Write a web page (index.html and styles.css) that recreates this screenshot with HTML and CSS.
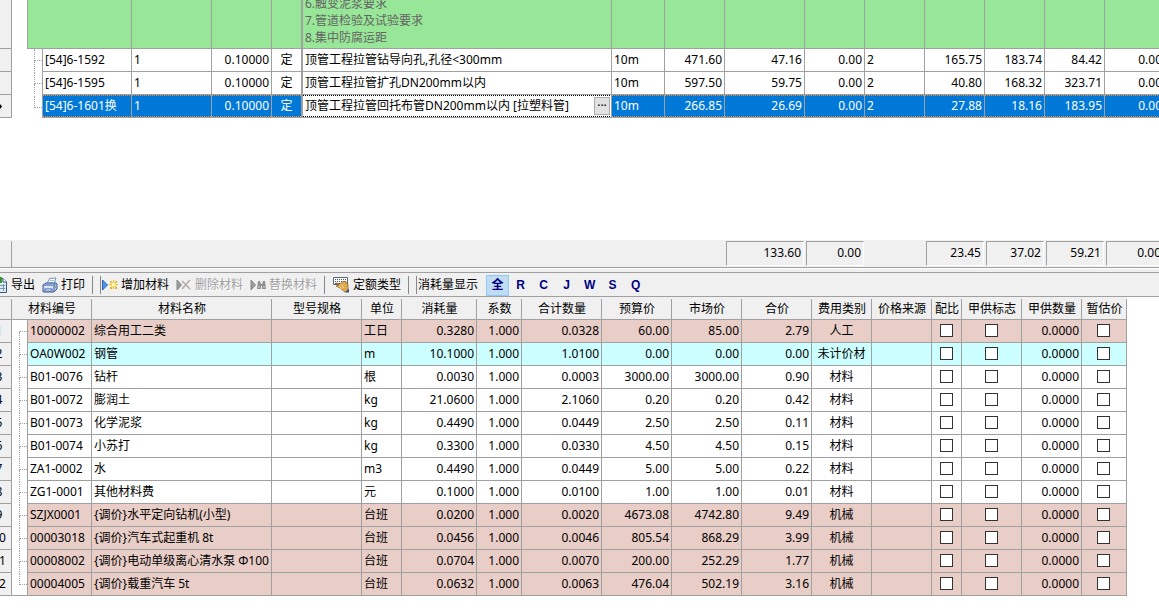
FILE: index.html
```html
<!DOCTYPE html>
<html lang="zh-CN">
<head>
<meta charset="utf-8">
<title>定额材料</title>
<link rel="stylesheet" href="styles.css">
</head>
<body>
<main class="app">
  <section class="quota">
    <table class="grid quota-grid">
      <colgroup id="quota-cols"></colgroup>
      <tbody id="quota-rows"></tbody>
    </table>
  </section>
  <section class="totals" id="totals"></section>
  <div class="splitter"></div>
  <nav class="toolbar">
    <button class="tool" type="button">
      <svg class="icon-export" width="8" height="18" viewBox="0 0 8 18"><path d="M-4 2.500h7l3.500 3.500v10.500H-4z" fill="#dcebf5" stroke="#3c5a78"/><path d="M3 2.500V6h3.500" fill="#fff" stroke="#3c5a78"/><path d="M0 9.500h5M0 12.500h5M3.500 8v7" stroke="#7898b0"/><path d="M0 1h2v6H0z" fill="#3e9430"/></svg>
      导出</button>
    <button class="tool" type="button">
      <svg width="16" height="16" viewBox="0 0 16 16"><path d="M5 7 7.500 1.500 14 1 12 7z" fill="#fff" stroke="#6b8fc7"/><path d="M8 3.500h4M7 5.500h4" stroke="#a3bbdf"/><path d="M1 8 4 6h10l1 1v5l-3 3H1z" fill="#b7c9e8" stroke="#3c5896"/><path d="M1 8h11l3-2M12 8v7" fill="none" stroke="#5272ae"/><path d="M2 10h9" stroke="#fff"/><path d="M3 12h7v2H3z" fill="#fff" stroke="#5272ae"/><path d="M13 9v2" stroke="#3ca03c"/></svg>
      打印</button>
    <i class="sep sep-wide"></i><i class="sep sep-grip"></i>
    <button class="tool" type="button">
      <svg width="16" height="16" viewBox="0 0 16 16"><path d="m.5 3 5 5-5 5z" fill="#4b94e8" stroke="#2860b8"/><g fill="#e6b32c"><path d="M8 4h2v2H8zM11 3h1v2h-1zM13 4h2v2h-2zM7 7h2v1H7zM14 7h2v1h-2zM8 10h2v2H8zM11 10h1v2h-1zM13 10h2v2h-2z"/><path d="M9 5h5v5H9z" fill="#f8d75c"/><path d="M10 6h3v3h-3z" fill="#fffac0"/></g></svg>
      增加材料</button>
    <button class="tool" type="button" disabled>
      <svg width="16" height="16" viewBox="0 0 16 16"><path d="m1 3 4.500 5L1 13z" fill="#9c9c9c" stroke="#888"/><path d="m6 4 8 8M14 3 6 12" stroke="#b5aaaa" stroke-width="1.500"/></svg>
      删除材料</button>
    <button class="tool" type="button" disabled>
      <svg width="16" height="16" viewBox="0 0 16 16"><path d="m1 3 4.500 5L1 13z" fill="#9c9c9c" stroke="#888"/><path d="M8 4h2l1 3h1l1-3h2l1 8h-4V9h-1v3H7z" fill="#909090"/><path d="M8 10h2M13 10h2" stroke="#d8d8d8"/></svg>
      替换材料</button>
    <i class="sep"></i>
    <button class="tool" type="button">
      <svg width="17" height="16" viewBox="0 0 17 16"><path d="M.5.500h14v7H.5z" fill="#fff" stroke="#5c6670"/><path d="M2 2.500h12M2 4.500h12M2 6.500h10" stroke="#44566f" stroke-dasharray="1 1"/><path d="m3 6 4 1 1-1 3-2 3 2 1 2v6l-3 1-5-4-4-2 3-1z" fill="#dfa94e" stroke="#8a5b20" stroke-width=".7"/><path d="m6 9 3 3m-1-5 3 4" stroke="#f5d48c"/><path d="m12 15.500 4-4v4z" fill="#35557b"/></svg>
      定额类型</button>
    <i class="sep sep-wide"></i><i class="sep sep-label"></i>
    <span>消耗量显示</span>
    <div class="filters">
      <button class="filter active" type="button">全</button><button class="filter" type="button">R</button><button class="filter" type="button">C</button><button class="filter" type="button">J</button><button class="filter" type="button">W</button><button class="filter" type="button">S</button><button class="filter" type="button">Q</button>
    </div>
  </nav>
  <section class="materials">
    <table class="grid material-grid">
      <colgroup id="material-cols"></colgroup>
      <thead><tr id="material-head"></tr></thead>
      <tbody id="material-rows"></tbody>
    </table>
  </section>
</main>
<script src="app.js"></script>
</body>
</html>
```
FILE: styles.css
```css
* { box-sizing: border-box; }
body {
  margin: 0;
  background: #fff;
  color: #000;
  font: 12px/16px "Noto Sans", "Noto Sans CJK SC", sans-serif;
  overflow: hidden;
}
button { font: inherit; color: inherit; }
.app { min-height: 100vh; }
.quota { height: 240px; overflow: hidden; }
.materials { overflow: hidden; }
.grid {
  table-layout: fixed;
  width: 0;
  margin-left: -13px;
  border-collapse: separate;
  border-spacing: 0;
}
.grid td, .grid th {
  height: 23px;
  padding: 0 2px;
  border-right: 1px solid #a0a0a0;
  border-bottom: 1px solid #a0a0a0;
  font-weight: normal;
  white-space: nowrap;
  overflow: hidden;
  text-align: left;
}
.grid .num { text-align: right; }
.grid .mid { text-align: center; }
.grid .gutter { background: #f0f0f0; text-align: center; }
.grid .tree { padding: 0; background: #fff; border-bottom: 0; }
.grid .last .tree { border-bottom: 1px solid #a0a0a0; }

/* upper grid */
.quota-grid .mark { border-right-width: 2px; }
.quota-grid .last .tree { border-bottom: 0; }
.section-row td { height: 49px; background: #98e698; color: #646464; }
.section-row .notes {
  display: flex;
  flex-direction: column;
  justify-content: flex-end;
  height: 48px;
  padding-bottom: 2px;
  line-height: 17px;
  overflow: hidden;
}
.branch { display: block; height: 23px; padding-left: 7px; }
.quota-grid .branch { padding-left: 22px; }
.branch::before {
  content: "";
  display: block;
  height: 11px;
  border-left: 1px dotted #a0a0a0;
  border-bottom: 1px dotted #a0a0a0;
}
.branch::after {
  content: "";
  display: block;
  height: 12px;
  border-left: 1px dotted #a0a0a0;
}
.last .branch { height: 22px; }
.first .branch::before { border-left-color: transparent; }
.last .branch::after { border-left: 0; }
.current td {
  background-color: #0078d7;
  color: #fff;
  background-image:
    linear-gradient(90deg, #e68a3c 50%, transparent 50%),
    linear-gradient(90deg, #e68a3c 50%, transparent 50%);
  background-size: 2px 1px;
  background-position: left top, left bottom;
  background-repeat: repeat-x;
  background-clip: padding-box;
}
.current .gutter { background: #f0f0f0; color: #000; }
.current .tree { background: #fff; }
.current .editing {
  background-color: #fff;
  background-image:
    linear-gradient(90deg, #000 50%, transparent 50%),
    linear-gradient(90deg, #000 50%, transparent 50%);
  color: #000;
}
.editor { display: flex; align-items: center; justify-content: space-between; }
.more {
  width: 16px;
  height: 18px;
  padding: 0;
  border: 1px solid #adadad;
  background: #e1e1e1;
  line-height: 12px;
}
.quota-grid .editing { padding-right: 1px; }
.pointer { display: block; width: 4px; margin-left: 9px; }

/* totals */
.totals {
  display: grid;
  grid-template-columns: 12px 712px 80px 60px 60px 60px 60px 60px 60px;
  height: 28px;
  padding-top: 1px;
  background: #f0f0f0;
  border-bottom: 1px solid #a0a0a0;
  overflow: hidden;
}
.totals .corner { border-right: 1px solid #a0a0a0; }
.totals .sum {
  height: 25px;
  margin: 0 0 0 2px;
  padding: 3px 2px 0 0;
  border: 1px solid #a0a0a0;
  border-right-color: #fff;
  border-bottom-color: #fff;
  text-align: right;
}
.splitter { height: 5px; background: #f0f0f0; border-top: 1px solid #fff; border-bottom: 1px solid #a0a0a0; }

/* toolbar */
.toolbar {
  display: flex;
  align-items: center;
  height: 24px;
  padding-top: 1px;
  background: #f0f0f0;
  border-bottom: 1px solid #a0a0a0;
  white-space: nowrap;
}
.tool {
  display: flex;
  align-items: center;
  gap: 3px;
  margin-right: 7px;
  padding: 0;
  border: 0;
  background: none;
}
.tool svg { flex: none; }
.tool:disabled { color: #a0a0a0; text-shadow: 1px 1px #fff; }
.sep { width: 1px; height: 18px; margin-right: 8px; background: #888; }
.sep-wide { margin-right: 7px; }
.sep-grip { margin-right: 1px; }
.sep-label { margin-right: 1px; }
.filters { display: flex; margin-left: 8px; }
.filter {
  width: 23px;
  height: 21px;
  padding: 0;
  border: 1px solid transparent;
  background: none;
  color: #000080;
  font: bold 12px/16px "Liberation Sans", "Noto Sans CJK SC", sans-serif;
}
.filter.active { border-color: #90c8f6; background: #c0dcf3; }

/* lower grid */
.material-grid th {
  background: linear-gradient(#a0a0a0, #a0a0a0) right bottom / 1px 20px no-repeat #f0f0f0;
  border-right: 0;
  padding: 2px 0 0;
  text-align: center;
}
.adjusted td { background: #e9cdc7; }
.unpriced td { background: #ccffff; }
.material-grid .boxed { padding: 0 2px 1px 1px; }
.check {
  appearance: none;
  display: block;
  width: 13px;
  height: 13px;
  margin: 0 auto;
  border: 1px solid #333;
  background: #fff;
}
```
FILE: app.js
```js
const cols = (id, widths) => {
  document.getElementById(id).innerHTML = widths.map(w => `<col style="width:${w}px">`).join("");
};
const td = (text, cls = "", attrs = "") => `<td class="${cls}" ${attrs}>${text}</td>`;

cols("quota-cols", [25, 16, 15, 89, 80, 60, 31, 309, 53, 60, 80, 60, 60, 60, 60, 60, 60]);
cols("material-cols", [25, 16, 64, 180, 90, 40, 75, 45, 80, 70, 70, 70, 60, 60, 30, 60, 60, 45]);

const quotas = [
  ["[54]6-1592", "顶管工程拉管钻导向孔,孔径&lt;300mm", "471.60", "47.16", "165.75", "183.74", "84.42"],
  ["[54]6-1595", "顶管工程拉管扩孔DN200mm以内", "597.50", "59.75", "40.80", "168.32", "323.71"],
  ["[54]6-1601换", "顶管工程拉管回托布管DN200mm以内 [拉塑料管]", "266.85", "26.69", "27.88", "18.16", "183.95"]
];
const pointer = '<svg class="pointer" width="4" height="7" viewBox="0 0 4 7"><path d="M0 3h2V1l2 2.500L2 6V4H0z"/></svg>';
const sectionRow = `<tr class="section-row">${td("", "gutter")}${td("", "tree")}${td("", "", 'colspan="2"')}${td("")}${td("")}${td("", "mark")}` +
  td('<div class="notes"><div>6.触变泥浆要求</div><div>7.管道检验及试验要求</div><div>8.集中防腐运距</div></div>') +
  td("").repeat(9) + "</tr>";
document.getElementById("quota-rows").innerHTML = sectionRow + quotas.map((q, i) => {
  const current = i === quotas.length - 1;
  const name = current
    ? td(`<div class="editor"><span>${q[1]}</span><button class="more" type="button" aria-label="选择">···</button></div>`, "editing")
    : td(q[1]);
  return `<tr class="${current ? "current last" : ""}">${td(current ? pointer : "", "gutter")}` +
    td('<span class="branch"></span>', "tree", 'colspan="2"') + td(q[0]) + td("1") + td("0.10000", "num") +
    td("定", "mark mid") + name + td("10m") + td(q[2], "num") + td(q[3], "num") + td("0.00", "num") + td("2") +
    td(q[4], "num") + td(q[5], "num") + td(q[6], "num") + td("0.00", "num") + "</tr>";
}).join("");

document.getElementById("totals").innerHTML = '<div class="corner"></div><div></div>' +
  ["133.60", "0.00", "", "23.45", "37.02", "59.21", "0.00"]
    .map(v => v ? `<div class="sum">${v}</div>` : "<div></div>").join("");

const heads = ["材料名称", "型号规格", "单位", "消耗量", "系数", "合计数量", "预算价", "市场价", "合价", "费用类别", "价格来源", "配比", "甲供标志", "甲供数量", "暂估价"];
document.getElementById("material-head").innerHTML = '<th></th><th colspan="2">材料编号</th>' + heads.map(h => `<th>${h}</th>`).join("");

const materials = [
  ["10000002", "综合用工二类", "工日", "0.3280", "0.0328", "60.00", "85.00", "2.79", "人工", "adjusted"],
  ["OA0W002", "钢管", "m", "10.1000", "1.0100", "0.00", "0.00", "0.00", "未计价材", "unpriced"],
  ["B01-0076", "钻杆", "根", "0.0030", "0.0003", "3000.00", "3000.00", "0.90", "材料", ""],
  ["B01-0072", "膨润土", "kg", "21.0600", "2.1060", "0.20", "0.20", "0.42", "材料", ""],
  ["B01-0073", "化学泥浆", "kg", "0.4490", "0.0449", "2.50", "2.50", "0.11", "材料", ""],
  ["B01-0074", "小苏打", "kg", "0.3300", "0.0330", "4.50", "4.50", "0.15", "材料", ""],
  ["ZA1-0002", "水", "m3", "0.4490", "0.0449", "5.00", "5.00", "0.22", "材料", ""],
  ["ZG1-0001", "其他材料费", "元", "0.1000", "0.0100", "1.00", "1.00", "0.01", "材料", ""],
  ["SZJX0001", "{调价}水平定向钻机(小型)", "台班", "0.0200", "0.0020", "4673.08", "4742.80", "9.49", "机械", "adjusted"],
  ["00003018", "{调价}汽车式起重机 8t", "台班", "0.0456", "0.0046", "805.54", "868.29", "3.99", "机械", "adjusted"],
  ["00008002", "{调价}电动单级离心清水泵 Φ100", "台班", "0.0704", "0.0070", "200.00", "252.29", "1.77", "机械", "adjusted"],
  ["00004005", "{调价}载重汽车 5t", "台班", "0.0632", "0.0063", "476.04", "502.19", "3.16", "机械", "adjusted"]
];
const check = label => td(`<input class="check" type="checkbox" aria-label="${label}">`, "boxed");
document.getElementById("material-rows").innerHTML = materials.map((m, i) => {
  const edge = i === 0 ? " first" : i === materials.length - 1 ? " last" : "";
  return `<tr class="${m[9]}${edge}">${td(i + 1, "gutter")}${td('<span class="branch"></span>', "tree")}` +
    td(m[0]) + td(m[1]) + td("") + td(m[2]) + td(m[3], "num") + td("1.000", "num") + td(m[4], "num") +
    td(m[5], "num") + td(m[6], "num") + td(m[7], "num") + td(m[8], "mid") + td("") +
    check("配比") + check("甲供标志") + td("0.0000", "num") + check("暂估价") + "</tr>";
}).join("");
```
